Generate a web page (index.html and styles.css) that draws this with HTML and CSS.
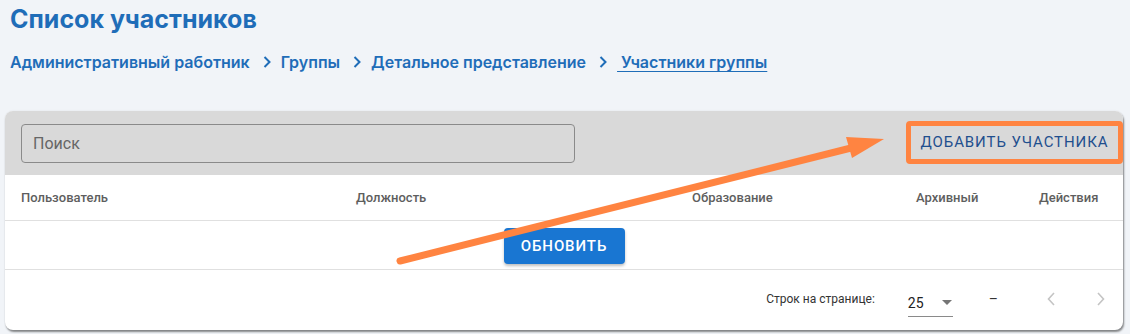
FILE: index.html
```html
<!DOCTYPE html>
<html lang="ru">
<head>
<meta charset="utf-8">
<link rel="stylesheet" href="styles.css">
</head>
<body>
<div class="page">
  <h1 class="title">Список участников</h1>
  <nav class="crumbs">
    <a class="crumb">Административный работник</a>
    <svg class="chev" viewBox="0 0 10 14" width="10" height="14"><path d="M2.5 2 L7.5 7 L2.5 12" fill="none" stroke="#1f6db8" stroke-width="2"/></svg>
    <a class="crumb">Группы</a>
    <svg class="chev" viewBox="0 0 10 14" width="10" height="14"><path d="M2.5 2 L7.5 7 L2.5 12" fill="none" stroke="#1f6db8" stroke-width="2"/></svg>
    <a class="crumb">Детальное представление</a>
    <svg class="chev" viewBox="0 0 10 14" width="10" height="14"><path d="M2.5 2 L7.5 7 L2.5 12" fill="none" stroke="#1f6db8" stroke-width="2"/></svg>
    <a class="crumb current">&nbsp;Участники группы</a>
  </nav>

  <section class="card">
    <div class="toolbar">
      <div class="search">Поиск</div>
      <div class="highlight"><button class="add">ДОБАВИТЬ УЧАСТНИКА</button></div>
    </div>
    <div class="thead">
      <div>Пользователь</div>
      <div>Должность</div>
      <div>Образование</div>
      <div>Архивный</div>
      <div>Действия</div>
    </div>
    <div class="tbody">
      <button class="refresh">ОБНОВИТЬ</button>
    </div>
    <div class="pager">
      <span class="rows-label">Строк на странице:</span>
      <span class="select">25
        <svg viewBox="0 0 10 5" width="10" height="5"><path d="M0 0 L10 0 L5 5 Z" fill="#757575"/></svg>
      </span>
      <span class="range">–</span>
      <span class="navbtn"><svg viewBox="0 0 10 16" width="10" height="16"><path d="M8 2 L2.5 8 L8 14" fill="none" stroke="#c4c4c4" stroke-width="1.6"/></svg></span>
      <span class="navbtn"><svg viewBox="0 0 10 16" width="10" height="16"><path d="M2 2 L7.5 8 L2 14" fill="none" stroke="#c4c4c4" stroke-width="1.6"/></svg></span>
    </div>
  </section>

  <svg class="arrow" viewBox="0 0 1130 334" width="1130" height="334">
    <line x1="400" y1="261" x2="855" y2="147" stroke="#ff8441" stroke-width="7" stroke-linecap="round"/>
    <polygon points="846,137 884,139 852,158" fill="#ff8441"/>
  </svg>
</div>
</body>
</html>
```

FILE: styles.css
```css
* { box-sizing: border-box; }
html, body { margin: 0; padding: 0; }
body {
  background: #f1f4f8;
  font-family: Roboto, "Liberation Sans", sans-serif;
  width: 1130px;
  height: 334px;
  overflow: hidden;
}
.page {
  position: relative;
  padding: 0 7px 0 5px;
}
.title {
  margin: 0;
  padding: 4px 0 0 5px;
  height: 40px;
  font-family: Inter, "Noto Sans", sans-serif;
  font-weight: 700;
  font-size: 25px;
  line-height: 30px;
  color: #1f6db8;
  letter-spacing: 0;
}
.crumbs {
  display: flex;
  align-items: center;
  padding-left: 5px;
  padding-bottom: 2px;
  height: 46px;
  font-family: Inter, "Noto Sans", sans-serif;
  font-weight: 600;
  font-size: 16px;
  color: #1f6db8;
}
.crumb { color: #1f6db8; }
.current { text-decoration: underline; text-underline-offset: 3px; }
.chev { margin: 0 9px 0 12px; }

.card {
  margin-top: 25px;
  background: #fff;
  border-radius: 8px;
  overflow: hidden;
  box-shadow: 1px 2px 2px rgba(0,0,0,0.45), 0 0 2px rgba(0,0,0,0.08);
  height: 219px;
}
.toolbar {
  background: #d9d9d9;
  height: 64px;
  display: flex;
  align-items: center;
  justify-content: space-between;
  padding: 0 0 0 16px;
}
.search {
  width: 554px;
  height: 39px;
  border: 1px solid #8a8a8a;
  border-radius: 4px;
  padding-left: 11px;
  line-height: 37px;
  font-size: 16px;
  color: #666;
}
.highlight {
  border: 5px solid #ff8441;
  border-radius: 4px;
  width: 217px;
  height: 43px;
  margin-top: -2px;
  display: flex;
  align-items: center;
  justify-content: center;
}
.add {
  background: transparent;
  border: 0;
  font-family: Roboto, sans-serif;
  font-size: 15px;
  letter-spacing: 0.9px;
  color: #1f4f8e;
  padding: 0;
}
.thead {
  display: grid;
  grid-template-columns: 335px 336px 224px 123px 1fr;
  padding-left: 16px;
  height: 46px;
  align-items: center;
  border-bottom: 1px solid #e0e0e0;
  font-size: 13px;
  font-weight: 500;
  color: #5e5e5e;
}
.tbody {
  height: 49px;
  display: flex;
  align-items: center;
  justify-content: center;
  border-bottom: 1px solid #e0e0e0;
}
.refresh {
  width: 121px;
  height: 36px;
  border: 0;
  border-radius: 4px;
  background: #1976d2;
  color: #fff;
  font-family: Roboto, sans-serif;
  font-weight: 500;
  font-size: 15px;
  letter-spacing: 0.9px;
  box-shadow: 0 2px 3px rgba(0,0,0,0.25);
  margin-top: 1px;
}
.pager {
  display: flex;
  align-items: center;
  justify-content: flex-end;
  height: 58px;
  padding-right: 2px;
  font-size: 12px;
  color: #333;
}
.rows-label { margin-right: 33px; }
.select {
  width: 45px;
  height: 28px;
  display: flex;
  align-items: center;
  gap: 18px;
  border-bottom: 1px solid #8a8a8a;
  font-size: 14px;
  color: #222;
  margin-top: 8px;
}
.range { margin-left: 36px; margin-right: 23px; font-size: 14px; }
.navbtn {
  width: 40px;
  height: 40px;
  display: flex;
  align-items: center;
  justify-content: center;
  margin-left: 10px;
}
.arrow {
  position: absolute;
  left: 0;
  top: 0;
  pointer-events: none;
}
```
